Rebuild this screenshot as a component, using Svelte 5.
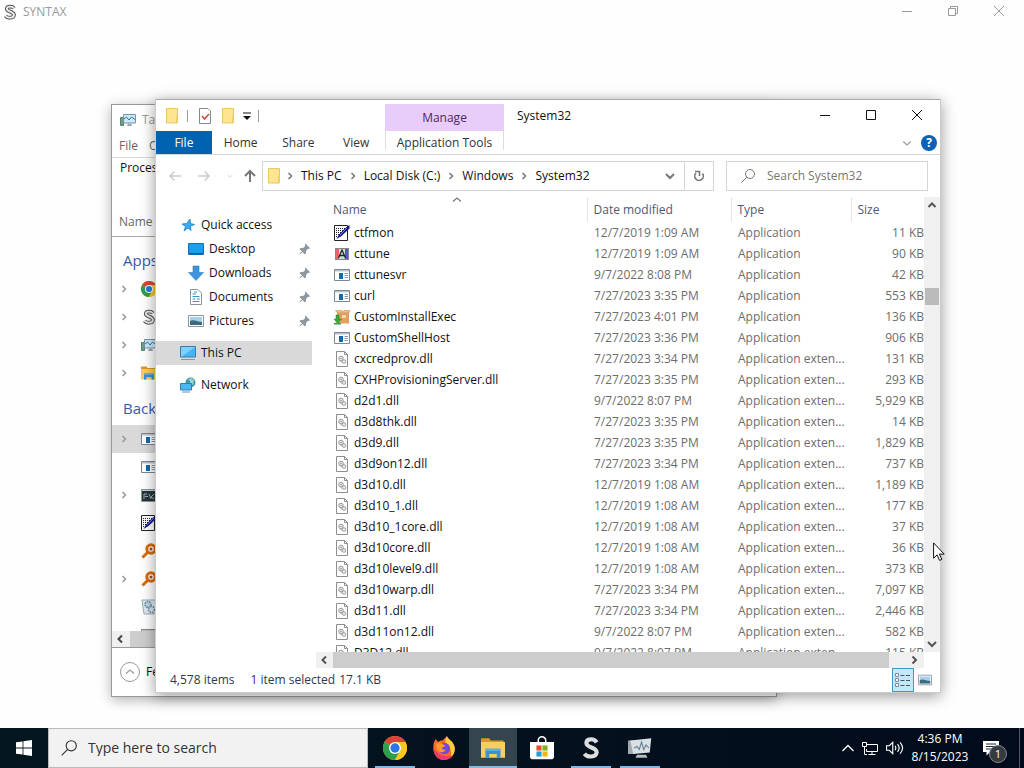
<script lang="ts">
  // Windows desktop: a maximised SYNTAX window, Task Manager behind an
  // Explorer window on System32, and the taskbar along the bottom.

  type Kind = 'pen' | 'font' | 'exe' | 'box' | 'dll'
  type FileRow = { name: string; kind: Kind; date: string; size: string }

  function file(name: string, kind: Kind, date: string, size: string): FileRow {
    return { name, kind, date, size }
  }

  const files: FileRow[] = [
    file('ctfmon', 'pen', '12/7/2019 1:09 AM', '11 KB'),
    file('cttune', 'font', '12/7/2019 1:09 AM', '90 KB'),
    file('cttunesvr', 'exe', '9/7/2022 8:08 PM', '42 KB'),
    file('curl', 'exe', '7/27/2023 3:35 PM', '553 KB'),
    file('CustomInstallExec', 'box', '7/27/2023 4:01 PM', '136 KB'),
    file('CustomShellHost', 'exe', '7/27/2023 3:36 PM', '906 KB'),
    file('cxcredprov.dll', 'dll', '7/27/2023 3:34 PM', '131 KB'),
    file('CXHProvisioningServer.dll', 'dll', '7/27/2023 3:35 PM', '293 KB'),
    file('d2d1.dll', 'dll', '9/7/2022 8:07 PM', '5,929 KB'),
    file('d3d8thk.dll', 'dll', '7/27/2023 3:35 PM', '14 KB'),
    file('d3d9.dll', 'dll', '7/27/2023 3:35 PM', '1,829 KB'),
    file('d3d9on12.dll', 'dll', '7/27/2023 3:34 PM', '737 KB'),
    file('d3d10.dll', 'dll', '12/7/2019 1:08 AM', '1,189 KB'),
    file('d3d10_1.dll', 'dll', '12/7/2019 1:08 AM', '177 KB'),
    file('d3d10_1core.dll', 'dll', '12/7/2019 1:08 AM', '37 KB'),
    file('d3d10core.dll', 'dll', '12/7/2019 1:08 AM', '36 KB'),
    file('d3d10level9.dll', 'dll', '12/7/2019 1:08 AM', '373 KB'),
    file('d3d10warp.dll', 'dll', '7/27/2023 3:34 PM', '7,097 KB'),
    file('d3d11.dll', 'dll', '7/27/2023 3:34 PM', '2,446 KB'),
    file('d3d11on12.dll', 'dll', '9/7/2022 8:07 PM', '582 KB'),
    file('D3D12.dll', 'dll', '9/7/2022 8:07 PM', '115 KB'),
  ]

  const pinned = ['Desktop', 'Downloads', 'Documents', 'Pictures']
  const crumbs = ['This PC', 'Local Disk (C:)', 'Windows', 'System32']

  const apps = ['chrome', 'syntax', 'monitor', 'folder']
  const background = [
    { icon: 'exe', open: true },
    { icon: 'exe', open: false },
    { icon: 'console', open: true },
    { icon: 'pen', open: false },
    { icon: 'search', open: false },
    { icon: 'search', open: true },
    { icon: 'gear', open: false },
    { icon: 'exe', open: false },
  ]

  const tasks = [
    { icon: 'chrome', label: 'Chrome', running: true },
    { icon: 'firefox', label: 'Firefox', running: false },
    { icon: 'folder', label: 'File Explorer', running: true },
    { icon: 'store', label: 'Store', running: false },
    { icon: 'bigS', label: 'Syntax', running: true },
    { icon: 'perf', label: 'Task Manager', running: true },
  ]

  let selected = $state('This PC')
  let query = $state('')
  let taskQuery = $state('')

  const isApp = (kind: Kind) => kind !== 'dll'
</script>

{#snippet icon(name: string, size = 16)}
  <svg class="icon" width={size} height={size} viewBox="0 0 16 16" aria-hidden="true">
    {#if name === 'pen'}
      <path d="M.5.5h13v15H.5z" fill="#fff" stroke="#222" />
      <path d="M2 3.500h9M2 5.500h8M2 7.500h7M2 9.500h5M2 11.500h3" stroke="#223" stroke-dasharray="1 1" />
      <path d="M2.500 14 5 9.500 12 2.500 15.500 0V3.500L7.500 11z" fill="#14148c" />
      <path d="m6 10 7-7" stroke="#6a78d8" />
    {:else if name === 'font'}
      <path d="M1 2h4v12H1z" fill="#e0686c" />
      <path d="M5 2h6v12H5z" fill="#c4e2d2" />
      <path d="M11 2h4v12h-4z" fill="#5a50dc" />
      <path d="M1.500 2.500h13v11h-13z" fill="none" stroke="#888" />
      <path d="M4.500 12 8 4l3.500 8M6 9.500h4" fill="none" stroke="#222" stroke-width="1.300" />
    {:else if name === 'exe'}
      <path d="M.5 2.500h15v11H.5z" fill="#fff" stroke="#7d8791" />
      <path d="M1 3h14v1.500H1z" fill="#b9c4ce" />
      <path d="M5 6h4v6H5z" fill="#1668a8" />
      <path d="M10.500 6.500H14M10.500 8.500H14M10.500 10.500H14" stroke="#8a9aa8" />
    {:else if name === 'box'}
      <path d="M3 3.500h12v11H3z" fill="#dfa060" />
      <path d="m3 3.500-1.500-2H8L9 3l1-1.500h6l-1 2.500z" fill="#eebd85" stroke="#c68a4a" stroke-width=".5" />
      <path d="M8 6h4v3H8z" fill="#f6d7ac" />
      <path d="M2 6h3v4h2.500L3.500 14.500 0 10h2z" fill="#38a838" stroke="#24842a" stroke-width=".5" />
      <path d="M0 14h7v1.500H0z" fill="#3d9c3c" />
    {:else if name === 'dll'}
      <path d="M2.500.5H10.500L13.500 3.500v12h-11z" fill="#fff" stroke="#8e8e8e" />
      <path d="M10.500.5v3h3" fill="none" stroke="#8e8e8e" />
      <circle cx="7" cy="7.500" r="2.300" fill="#eee" stroke="#999" />
      <circle cx="7" cy="7.500" r=".7" fill="#777" />
      <circle cx="10" cy="10.500" r="1.800" fill="#eee" stroke="#999" />
      <path d="m5.500 9 3 3" stroke="#aaa" />
    {:else if name === 'chrome'}
      <circle cx="8" cy="8" r="8" fill="#f9c622" />
      <path d="M8 8 1.070 4A8 8 0 0 1 14.930 4z" fill="#dc4437" />
      <path d="M8 8 1.070 4A8 8 0 0 0 8 16l3.300-6z" fill="#2da04e" />
      <path d="M8 4h6.930A8 8 0 0 1 8 16l3.400-6z" fill="#f9c622" />
      <circle cx="8" cy="8" r="4" fill="#fff" />
      <circle cx="8" cy="8" r="3.100" fill="#2b78e4" />
    {:else if name === 'firefox'}
      <path d="M1 6c0-2 1-3 1.500-4l1.500 2c1-1 2-1 3-1 1-1 2-2 3-3 0 2 4 3 5 7 1 5-3 9-7 9S0 12 1 6z" fill="#ff6a2b" />
      <path d="M10 0c0 2 4 3 5 7 .8 3.500-1 6.500-3 7.800C14 11 12 7 9 5c0-2 0-3 1-5z" fill="#ffd035" />
      <path d="M1 8c0 5 3 8 7 8 3 0 5-1.500 6-3-3 1-9 1-13-5z" fill="#f0386b" />
      <circle cx="8.300" cy="8.300" r="3.800" fill="#7b45d8" />
      <path d="M3 5c2-1 4 0 5 1 1 0 1 1-1 1.500-1 1 .5 2 2 1.500-1 3-5 2-6-1z" fill="#ff9a30" />
    {:else if name === 'folder'}
      <path d="M0 1.500h5.500l1 1.500H15v2H0z" fill="#d99a28" />
      <path d="M0 4h16v10.500H0z" fill="#f7cf60" />
      <path d="M3 14.500V8.500h10v6h-2.500V12h-5v2.500z" fill="#3d8fd0" />
      <path d="M3 8.500h10v1.500H3z" fill="#62aee4" />
    {:else if name === 'store'}
      <path d="M5.500 4.500V3a2.500 2.500 0 0 1 5 0v1.500" fill="none" stroke="#fff" />
      <path d="M0 4h16v10.500l-1 1H1l-1-1z" fill="#fff" />
      <path d="M4.300 6.300h3.400v3.400H4.300z" fill="#e8502c" />
      <path d="M8.300 6.300h3.400v3.400H8.300z" fill="#7ab51d" />
      <path d="M4.300 10.300h3.400v3.400H4.300z" fill="#1b9fe0" />
      <path d="M8.300 10.300h3.400v3.400H8.300z" fill="#f6b40a" />
    {:else if name === 'syntax'}
      <path d="M12 4.200C10.500 2 5 1.800 4.800 4.700 4.800 8 12 7.300 12 11c-.5 3.500-6.500 3.500-8.500.8" fill="none" stroke="#555" stroke-width="3.800" />
      <path d="M12 4.200C10.500 2 5 1.800 4.800 4.700 4.800 8 12 7.300 12 11c-.5 3.500-6.500 3.500-8.500.8" fill="none" stroke="#eee" stroke-width="1.800" />
    {:else if name === 'bigS'}
      <path d="M11.800 4.200C10 1.400 5 1.600 4.900 4.700 4.900 8.300 11.800 7 11.800 10.900c-.5 3.500-6.300 3.500-8.200.9" fill="none" stroke="#dedede" stroke-width="2.700" />
    {:else if name === 'monitor'}
      <path d="M.5 5.500h3v8h-3z" fill="#6aa37c" stroke="#5b7d74" />
      <path d="M3.500 2.500h12v8.500h-12z" fill="#cfe8f8" stroke="#7693a6" />
      <path d="m4 7 2.500-2 2.500 3 2.500-3L15 7.500" fill="none" stroke="#2678a8" />
      <path d="M8 11.500h3l1 2.500H7z" fill="#9aa8b2" />
    {:else if name === 'perf'}
      <path d="M0 3h4v9H0z" fill="#a2a8ac" />
      <path d="M1.500 3 15.500 1.500 14.500 11l-11 1z" fill="#d9dfe3" />
      <path d="m4 8 2-1 1.500 2L9 4l1.500 5L12 6l2 2" fill="none" stroke="#5d8294" stroke-width=".7" />
      <path d="M6 12.500h6l1 2H5z" fill="#b6bcc0" />
    {:else if name === 'console'}
      <path d="M.5 2.500h15v12H.5z" fill="#27343c" stroke="#8c969c" />
      <path d="M1 3.500h14" stroke="#c8d0d4" />
      <path d="M3 12V7h3M4 9.500h3M8 7l2 5M13 7l-3 3 3 2" fill="none" stroke="#9fb0b8" />
    {:else if name === 'search'}
      <circle cx="10" cy="6" r="4.200" fill="#fff" stroke="#d86c10" stroke-width="3" />
      <circle cx="10" cy="6" r="1.500" fill="#a94a06" />
      <path d="m7 9-5.500 5.500" stroke="#d86c10" stroke-width="3" />
    {:else if name === 'gear'}
      <path d="M1 1h14v11l-2 3H3z" fill="#dce8f0" stroke="#9aabb8" />
      <circle cx="7" cy="5.500" r="3" fill="#bcd5e4" stroke="#6a8496" stroke-width="1.500" stroke-dasharray="1.500 1" />
      <circle cx="10.500" cy="10.500" r="3" fill="#d5e6f0" stroke="#6a8496" stroke-width="1.500" stroke-dasharray="1.500 1" />
    {:else if name === 'Quick access'}
      <path d="m10 2 .5 4.500L14.500 7.500l-4 1.800.5 4.200-3-2.500L4 14l1.500-4.500L2 7l4.800-.5z" fill="#3daaf0" stroke="#1c7fc4" stroke-width=".8" />
    {:else if name === 'Desktop'}
      <path d="M.5 2.500h15v11H.5z" fill="#1e9df0" stroke="#1470b4" />
      <path d="M1 12.500h14" stroke="#0d5d9c" />
    {:else if name === 'Downloads'}
      <path d="M5 1h6v6.500h4.500L8 15.500.5 7.500H5z" fill="#3d94dc" stroke="#2c7dc0" stroke-width=".6" />
    {:else if name === 'Documents'}
      <path d="M2.500.5H10L13.500 4v11.500h-11z" fill="#fff" stroke="#8795a0" />
      <path d="M4.500 5H8M4.500 7.500h7M4.500 10h3M9 10h3M4.500 12.500h7M6 3h3" stroke="#3e98bc" />
    {:else if name === 'Pictures'}
      <path d="M.5 2.500h15v11H.5z" fill="#fff" stroke="#8a949c" />
      <path d="M2 4h12v8H2z" fill="#a9d0ea" />
      <path d="M2 8c4-2 7 1 12 1v3H2z" fill="#3c6a80" />
    {:else if name === 'This PC'}
      <path d="M.5 1.500h15V12H.5z" fill="#45b4f4" stroke="#3c7ba4" />
      <path d="M1 2h14L2 11.500H1z" fill="#7fd0fb" />
      <path d="M1 14.500h14" stroke="#8796a0" />
    {:else if name === 'Network'}
      <circle cx="10.500" cy="5.500" r="5" fill="#3b9cae" />
      <path d="M7 3c2-1 3 1 3 3l3 2 1-5-3-2z" fill="#9bd1c8" />
      <path d="M.5 6.500h11V13H.5z" fill="#4bb6f2" stroke="#2f7fb0" />
      <path d="M2 15h8" stroke="#5c94b4" />
    {:else if name === 'yellow'}
      <path d="M2.500.5h11V15h-11z" fill="#ffe590" stroke="#e8c866" />
      <path d="M12 8h2v6.500l-2 1z" fill="#efcf66" />
    {:else if name === 'check'}
      <path d="M2.500.5H11L13.500 3v12.500h-11z" fill="#fff" stroke="#888" />
      <path d="m5 8 2.500 3L12 6" fill="none" stroke="#d04a3a" stroke-width="1.500" />
    {:else if name === 'pin'}
      <path d="m9.500 2.500 4.500 4.500-1 1-1-.3-2 2.300v2.500l-1 1L3.500 8l1-1H7l2.300-2-.5-1.500zM5.500 10.500l1 1L2.500 14z" fill="#8d979e" />
    {:else if name === 'lens'}
      <circle cx="10" cy="6" r="4.500" fill="none" stroke="currentColor" />
      <path d="M6.800 9.200 1.500 14.500" stroke="currentColor" />
    {:else if name === 'min'}
      <path d="M3 7.500h10" stroke="currentColor" />
    {:else if name === 'max'}
      <path d="M3.500 2.500h9v9h-9z" fill="none" stroke="currentColor" />
    {:else if name === 'restore'}
      <path d="M3.500 4.500h7v7h-7zM5.500 4V2.500h7v7H11" fill="none" stroke="currentColor" />
    {:else if name === 'close'}
      <path d="m3 2 10 10M13 2 3 12" stroke="currentColor" />
    {:else if name === 'right'}
      <path d="m6.500 5 3 3-3 3" fill="none" stroke="currentColor" stroke-width="1.500" />
    {:else if name === 'left'}
      <path d="M10 4.500 6.500 8l3.500 3.500" fill="none" stroke="currentColor" stroke-width="2" />
    {:else if name === 'next'}
      <path d="m6.500 4.500 3.500 3.500-3.500 3.500" fill="none" stroke="currentColor" stroke-width="2" />
    {:else if name === 'up'}
      <path d="M4.500 10 8 6.500l3.500 3.500" fill="none" stroke="currentColor" stroke-width="2" />
    {:else if name === 'thin-up'}
      <path d="M4 9.500 8 6l4 3.500" fill="none" stroke="currentColor" stroke-width="1.200" />
    {:else if name === 'down'}
      <path d="m4 6 4 4 4-4" fill="none" stroke="currentColor" stroke-width="2" />
    {:else if name === 'thin-down'}
      <path d="m3 6 5 4.500L13 6" fill="none" stroke="currentColor" stroke-width="1.500" />
    {:else if name === 'back'}
      <path d="M14 8H3M7.500 3.500 3 8l4.500 4.500" fill="none" stroke="currentColor" stroke-width="1.500" />
    {:else if name === 'forward'}
      <path d="M2 8h11M8.500 3.500 13 8l-4.500 4.500" fill="none" stroke="currentColor" stroke-width="1.500" />
    {:else if name === 'parent'}
      <path d="M8 14V3M3 8l5-5 5 5" fill="none" stroke="currentColor" stroke-width="2" />
    {:else if name === 'refresh'}
      <path d="M5 5a4.300 4.300 0 1 0 6.500.500" fill="none" stroke="currentColor" stroke-width="1.600" />
      <path d="M4 3.500h4.500V8" fill="none" stroke="currentColor" stroke-width="1.600" />
    {:else if name === 'details'}
      <path d="M.5 1.500h3v3h-3zM.5 6.500h3v3h-3zM.5 11.500h3v3h-3z" fill="#fff" stroke="#7b86a8" />
      <path d="M5.500 3.500h4M11 3.500h4M5.500 8.500h4M11 8.500h4M5.500 13.500h4M11 13.500h4" stroke="#4a5666" />
    {:else if name === 'windows'}
      <path d="M0 2.300 6.600 1.400v6.200H0zM7.400 1.300 16 0v7.600H7.400zM0 8.400h6.600v6.200L0 13.700zM7.400 8.400H16V16l-8.600-1.300z" fill="#fff" />
    {:else if name === 'wired'}
      <path d="M5 4.500h10.500v7H4.500V9M10 12v2.500M6.500 14.500h7M.5 2.500h4v4h-4zM2.500 7v7.500H5" fill="none" stroke="#fff" />
    {:else if name === 'sound'}
      <path d="M.5 6h2.500l3-3v10l-3-3H.5z" fill="none" stroke="#fff" />
      <path d="M8 6q1.500 2 0 4M10.200 4.500q3 3.500 0 7M12.500 3q4.500 5 0 10" fill="none" stroke="#fff" />
    {:else if name === 'note'}
      <path d="M0 1h16v11H7l-3.500 3.500V12H0z" fill="#fff" />
      <path d="M3 4h10M3 6.500h10M3 9h6" stroke="#06101e" stroke-width=".9" />
    {/if}
  </svg>
{/snippet}

<div class="desktop">
  <header class="app-title">
    {@render icon('syntax')}
    <span>SYNTAX</span>
    <div class="controls">
      <button type="button" aria-label="Minimize">{@render icon('min')}</button>
      <button type="button" aria-label="Restore">{@render icon('restore')}</button>
      <button type="button" aria-label="Close">{@render icon('close')}</button>
    </div>
  </header>

  <main>
    <section class="window manager" aria-label="Task Manager">
      <div class="m-title">{@render icon('monitor')}<span>Task Manager</span></div>
      <nav class="m-menu">
        <button type="button">File</button>
        <button type="button">Options</button>
      </nav>
      <div class="m-tab">Processes</div>
      <div class="m-head">Name</div>
      <div class="m-list">
        <h2>Apps</h2>
        {#each apps as app}
          <div class="process"><span class="toggle">{@render icon('right')}</span>{@render icon(app)}</div>
        {/each}
        <h2>Background processes</h2>
        {#each background as item, i}
          <div class="process" class:current={i === 0}>
            <span class="toggle">{#if item.open}{@render icon('right')}{/if}</span>
            {@render icon(item.icon)}
          </div>
        {/each}
      </div>
      <div class="m-scroll">{@render icon('left')}<span class="thumb"></span></div>
      <div class="m-foot">
        <button type="button"><span class="ring">{@render icon('thin-up')}</span>Fewer details</button>
      </div>
    </section>

    <section class="window explorer" aria-label="System32">
      <div class="title-row">
        <div class="quick">
          {@render icon('yellow')}
          <span class="bar"></span>
          {@render icon('check')}
          {@render icon('yellow')}
          <svg width="8" height="8" viewBox="0 0 8 8" aria-hidden="true">
            <path d="M0 1h8" stroke="#111" /><path d="M0 4h8L4 8z" fill="#111" />
          </svg>
          <span class="bar"></span>
        </div>
        <button type="button" class="manage">Manage</button>
        <span class="caption">System32</span>
        <div class="controls">
          <button type="button" aria-label="Minimize">{@render icon('min')}</button>
          <button type="button" aria-label="Maximize">{@render icon('max')}</button>
          <button type="button" aria-label="Close">{@render icon('close')}</button>
        </div>
      </div>

      <div class="tabs">
        <div class="main-tabs">
          <button type="button" class="file-tab">File</button>
          <button type="button">Home</button>
          <button type="button">Share</button>
          <button type="button">View</button>
        </div>
        <button type="button" class="tools">Application Tools</button>
        <button type="button" class="expand" aria-label="Expand the ribbon">{@render icon('thin-down', 12)}</button>
        <button type="button" class="help" aria-label="Help">?</button>
      </div>

      <div class="nav">
        <div class="history">
          <button type="button" aria-label="Back" disabled>{@render icon('back')}</button>
          <button type="button" aria-label="Forward" disabled>{@render icon('forward')}</button>
          <button type="button" class="recent" aria-label="Recent locations" disabled>{@render icon('thin-down', 8)}</button>
          <button type="button" aria-label="Up">{@render icon('parent')}</button>
        </div>
        <div class="address">
          {@render icon('yellow')}
          <nav class="crumbs">
            {#each crumbs as crumb}
              {@render icon('right')}
              <a href="#{crumb}">{crumb}</a>
            {/each}
          </nav>
          <button type="button" class="drop" aria-label="Previous locations">{@render icon('down')}</button>
          <button type="button" class="refresh" aria-label="Refresh">{@render icon('refresh')}</button>
        </div>
        <label class="search">
          {@render icon('lens')}
          <input type="text" bind:value={query} placeholder="Search System32" aria-label="Search System32" />
        </label>
      </div>

      <div class="body">
        <nav class="side">
          {@render place('Quick access')}
          {#each pinned as name}
            {@render place(name, true)}
          {/each}
          <div class="gap"></div>
          {@render place('This PC')}
          <div class="gap"></div>
          {@render place('Network')}
        </nav>
        <div class="pane">
          <div class="list">
            <table>
              <colgroup>
                <col /><col class="date-col" /><col class="type-col" /><col class="size-col" />
              </colgroup>
              <thead>
                <tr>
                  <th class="name"><span class="sort">{@render icon('thin-up')}</span>Name</th>
                  <th>Date modified</th>
                  <th>Type</th>
                  <th>Size</th>
                </tr>
              </thead>
              <tbody>
                {#each files as f (f.name)}
                  <tr>
                    <td class="name"><div>{@render icon(f.kind)}<span>{f.name}</span></div></td>
                    <td>{f.date}</td>
                    <td>{isApp(f.kind) ? 'Application' : 'Application exten...'}</td>
                    <td class="size">{f.size}</td>
                  </tr>
                {/each}
              </tbody>
            </table>
          </div>
          <div class="v-scroll">
            {@render icon('up')}
            <span class="thumb"></span>
            {@render icon('down')}
          </div>
          <div class="h-scroll">
            {@render icon('left')}
            <span class="thumb"></span>
            <span class="end">{@render icon('next')}</span>
          </div>
        </div>
      </div>

      <footer class="status">
        <span class="count">4,578 items</span>
        <span>1 item selected</span>
        <span>17.1 KB</span>
        <div class="views">
          <button type="button" class="on" aria-label="Details">{@render icon('details')}</button>
          <button type="button" aria-label="Large thumbnails">{@render icon('Pictures', 14)}</button>
        </div>
      </footer>
    </section>
  </main>

  <footer class="taskbar">
    <button type="button" class="start" aria-label="Start">{@render icon('windows')}</button>
    <label class="task-search">
      {@render icon('lens', 18)}
      <input type="text" bind:value={taskQuery} placeholder="Type here to search" aria-label="Type here to search" />
    </label>
    <div class="tasks">
      {#each tasks as task}
        <button
          type="button"
          class:running={task.running}
          class:active={task.icon === 'folder'}
          aria-label={task.label}
        >
          {@render icon(task.icon, 24)}
        </button>
      {/each}
    </div>
    <div class="tray">
      <button type="button" aria-label="Show hidden icons">
        <svg width="12" height="8" viewBox="0 0 12 8" aria-hidden="true">
          <path d="m.5 7 5.500-5.500L11.500 7" fill="none" stroke="#fff" stroke-width="1.300" />
        </svg>
      </button>
      <button type="button" aria-label="Network status">{@render icon('wired')}</button>
      <button type="button" aria-label="Volume">{@render icon('sound', 18)}</button>
      <div class="clock"><span>4:36 PM</span><span>8/15/2023</span></div>
      <button type="button" class="notes" aria-label="Notifications">
        {@render icon('note')}
        <span class="badge">1</span>
      </button>
      <span class="peek"></span>
    </div>
  </footer>

  <svg class="cursor" width="12" height="19" viewBox="0 0 12 19" aria-hidden="true">
    <path d="M.6.900v15.300l3.500-3.300 2.400 5.500 2.300-1-2.400-5.300h4.800z" fill="#fff" stroke="#111" />
  </svg>
</div>

{#snippet place(name: string, pin = false)}
  <button type="button" class="place" class:nested={pin} class:selected={selected === name} onclick={() => (selected = name)}>
    {@render icon(name)}
    <span>{name}</span>
    {#if pin}<i>{@render icon('pin')}</i>{/if}
  </button>
{/snippet}

<style>
  :global(body) {
    margin: 0;
  }
  .desktop {
    position: relative;
    display: flex;
    flex-direction: column;
    min-height: 100vh;
    overflow: hidden;
    background: #fefefe;
    color: #111;
    font: 12px/16px 'Open Sans', 'Noto Sans', sans-serif;
  }
  main {
    flex: 1;
  }
  .icon {
    display: block;
    flex: none;
  }
  button {
    display: flex;
    align-items: center;
    justify-content: center;
    padding: 0;
    border: 0;
    background: none;
    color: inherit;
    font: inherit;
  }
  input {
    flex: 1;
    min-width: 0;
    padding: 0;
    border: 0;
    outline: 0;
    background: none;
    color: inherit;
    font: inherit;
  }
  input::placeholder {
    color: inherit;
    opacity: 1;
  }

  .app-title {
    display: flex;
    align-items: center;
    gap: 5px;
    height: 23px;
    padding-left: 2px;
    color: #999;
  }
  .controls {
    display: flex;
    align-self: stretch;
    margin-left: auto;
  }
  .controls button {
    width: 46px;
  }
  .app-title .controls {
    margin-right: 2px;
  }

  .window {
    position: absolute;
    display: flex;
    flex-direction: column;
    background: #fff;
  }

  /* Task Manager */
  .manager {
    inset: 104px 247px 71px 111px;
    overflow: hidden;
    border: 1px solid #999;
    box-shadow: 0 3px 12px rgb(0 0 0 / 30%);
    color: #666;
    white-space: nowrap;
  }
  .m-title {
    display: flex;
    align-items: center;
    gap: 6px;
    height: 30px;
    padding-left: 8px;
    color: #999;
  }
  .m-menu {
    display: flex;
    align-items: center;
    gap: 11px;
    height: 22px;
    padding-left: 7px;
    border-bottom: 1px solid #d8d8d8;
  }
  .m-tab {
    height: 42px;
    padding: 2px 8px 0;
    color: #111;
  }
  .m-head {
    box-sizing: border-box;
    height: 35px;
    padding: 12px 7px 0;
    border-bottom: 1px solid #aaa;
  }
  .m-list {
    flex: 1;
    overflow: hidden;
    padding-top: 8px;
  }
  h2 {
    margin: 0;
    padding-left: 11px;
    color: #3a5aa8;
    font-size: 15px;
    font-weight: 400;
    line-height: 30px;
  }
  .process {
    display: flex;
    align-items: center;
    gap: 9px;
    height: 28px;
    padding-left: 4px;
  }
  .process + h2 {
    padding-top: 6px;
    padding-bottom: 2px;
  }
  .process.current {
    background: #d9d9d9;
  }
  .toggle {
    width: 16px;
    color: #999;
  }
  .m-scroll {
    display: flex;
    height: 16px;
    border-bottom: 1px solid #999;
    background: #f0f0f0;
    color: #444;
  }
  .thumb {
    background: #cdcdcd;
  }
  .m-scroll .thumb {
    flex: 1;
    margin-left: 2px;
  }
  .m-foot {
    display: flex;
    height: 48px;
    padding-left: 8px;
    color: #111;
  }
  .m-foot button {
    gap: 6px;
  }
  .ring {
    padding: 1px;
    border: 1px solid #999;
    border-radius: 50%;
    color: #999;
  }

  /* Explorer */
  .explorer {
    inset: 99px 83px 75px 155px;
    border: 1px solid #ccc;
    border-top-color: #aaa;
    box-shadow: 0 3px 14px rgb(0 0 0 / 40%);
  }
  .title-row {
    display: flex;
    height: 31px;
  }
  .quick {
    display: flex;
    align-items: center;
    gap: 7px;
    width: 221px;
    padding-left: 8px;
  }
  .bar {
    width: 1px;
    height: 12px;
    margin-right: 2px;
    background: #999;
  }
  .manage {
    width: 119px;
    height: 27px;
    margin-top: 4px;
    background: #e8ccfa;
    color: #4c2a66;
  }
  .caption {
    padding: 8px 0 0 13px;
  }
  .tabs {
    display: flex;
    height: 23px;
    border-bottom: 1px solid #d5d5d5;
    color: #333;
  }
  .main-tabs {
    display: flex;
    width: 229px;
  }
  .main-tabs button {
    width: 58px;
  }
  .main-tabs .file-tab {
    width: 56px;
    background: #0063b1;
    color: #fff;
  }
  .tools {
    width: 119px;
    margin-bottom: 4px;
    padding-top: 4px;
    border: solid #ddd;
    border-width: 0 1px;
  }
  .expand {
    margin-left: auto;
    color: #999;
  }
  .help {
    align-self: center;
    width: 16px;
    height: 16px;
    margin: 0 3px 0 8px;
    border-radius: 50%;
    background: #0a62b8;
    color: #fff;
    font-weight: 700;
  }
  .nav {
    display: flex;
    align-items: center;
    height: 41px;
    padding-right: 12px;
  }
  .history {
    display: flex;
    align-items: center;
    gap: 13px;
    width: 95px;
    padding-left: 11px;
    color: #777;
  }
  .history button:disabled {
    color: #ccc;
  }
  .history .recent {
    margin: 0 -5px 0 1px;
  }
  .address {
    display: flex;
    flex: 1;
    align-items: center;
    height: 28px;
    padding-left: 3px;
    border: 1px solid #d5d5d5;
    color: #777;
  }
  .crumbs {
    display: flex;
    align-items: center;
    gap: 3px;
    white-space: nowrap;
  }
  .crumbs a {
    color: #111;
    text-decoration: none;
  }
  .drop {
    width: 28px;
    margin-left: auto;
  }
  .address .refresh {
    align-self: stretch;
    width: 29px;
    border-left: 1px solid #d5d5d5;
  }
  .search {
    display: flex;
    align-items: center;
    gap: 11px;
    width: 187px;
    height: 28px;
    margin-left: 12px;
    padding-left: 13px;
    border: 1px solid #d5d5d5;
    color: #767676;
  }

  .body {
    display: flex;
    flex: 1;
    min-height: 0;
  }
  .side {
    width: 160px;
    padding-top: 17px;
  }
  .place {
    justify-content: flex-start;
    gap: 5px;
    width: 156px;
    height: 24px;
    padding-left: 24px;
  }
  .place.nested {
    padding-left: 32px;
  }
  .place.selected {
    background: #d9d9d9;
  }
  .place i {
    margin-left: auto;
  }
  .gap {
    height: 8px;
  }
  .pane {
    display: grid;
    flex: 1;
    grid-template-rows: 1fr 16px;
    grid-template-columns: 1fr 16px;
    min-width: 0;
    padding-top: 1px;
  }
  .list {
    overflow: hidden;
    padding-left: 6px;
    min-height: 0;
  }
  table {
    width: 100%;
    border-collapse: collapse;
    table-layout: fixed;
    color: #6d6d6d;
    white-space: nowrap;
  }
  .date-col {
    width: 144px;
  }
  .type-col {
    width: 120px;
  }
  .size-col {
    width: 73px;
  }
  th {
    position: relative;
    height: 25px;
    padding: 0 0 0 6px;
    border-left: 1px solid #e5e5e5;
    color: #4c5a7a;
    font-weight: 400;
    text-align: left;
  }
  th.name {
    padding-left: 11px;
    border: 0;
  }
  .sort {
    position: absolute;
    top: -5px;
    left: 48%;
    color: #777;
  }
  td {
    height: 21px;
    padding: 0 0 0 7px;
  }
  td.name {
    padding-left: 12px;
    color: #111;
  }
  td.name div {
    display: flex;
    align-items: center;
    gap: 4px;
  }
  td.size {
    padding: 0;
    text-align: right;
  }
  .v-scroll {
    display: flex;
    flex-direction: column;
    align-items: center;
    background: #f0f0f0;
    color: #555;
  }
  .v-scroll .thumb {
    width: 14px;
    height: 17px;
    margin-top: 75px;
    margin-bottom: auto;
    background: #bbb;
  }
  .h-scroll {
    display: flex;
    background: #f0f0f0;
    color: #555;
  }
  .h-scroll .thumb {
    flex: 1;
    margin-left: 1px;
  }
  .end {
    width: 35px;
    padding-left: 17px;
    box-sizing: border-box;
  }
  .status {
    display: flex;
    align-items: center;
    gap: 4px;
    height: 24px;
    padding-left: 14px;
    color: #2b3a52;
  }
  .count {
    margin-right: 12px;
  }
  .views {
    display: flex;
    align-self: stretch;
    margin-left: auto;
    padding-right: 4px;
  }
  .views button {
    width: 22px;
  }
  .views .on {
    border: 1px solid #3c9cc4;
    background: #c3e9f8;
  }

  /* Taskbar */
  .taskbar {
    display: flex;
    height: 40px;
    background: linear-gradient(90deg, #04171f, #020b1c);
    color: #fff;
  }
  .start {
    width: 48px;
  }
  .task-search {
    display: flex;
    flex: 0 1 320px;
    align-items: center;
    gap: 10px;
    box-sizing: border-box;
    padding-left: 11px;
    border: 1px solid #bbb;
    background: #f2f2f2;
    color: #333;
    font-size: 14px;
  }
  .tasks {
    display: flex;
    gap: 1px;
    padding-left: 3px;
  }
  .tasks button {
    position: relative;
    width: 48px;
  }
  .tasks .active {
    background: #34454e;
  }
  .tasks .running::after {
    position: absolute;
    right: 4px;
    bottom: 0;
    left: 4px;
    height: 2px;
    background: #80b8e8;
    content: '';
  }
  .tasks .active::after {
    right: 0;
    left: 0;
  }
  .tray {
    display: flex;
    gap: 8px;
    margin-left: auto;
  }
  .clock {
    display: flex;
    flex-direction: column;
    align-items: center;
    justify-content: center;
    width: 56px;
    line-height: 18px;
    white-space: nowrap;
  }
  .notes {
    position: relative;
    justify-content: flex-start;
    width: 24px;
    margin: 0 4px 0 7px;
  }
  .badge {
    position: absolute;
    top: 17px;
    right: 0;
    width: 16px;
    height: 16px;
    border: 1px solid #888;
    border-radius: 50%;
    background: #333a42;
    font-size: 11px;
    line-height: 16px;
  }
  .peek {
    width: 4px;
    border-left: 1px solid #556;
  }
  .cursor {
    position: absolute;
    top: 542px;
    left: 933px;
  }
</style>
